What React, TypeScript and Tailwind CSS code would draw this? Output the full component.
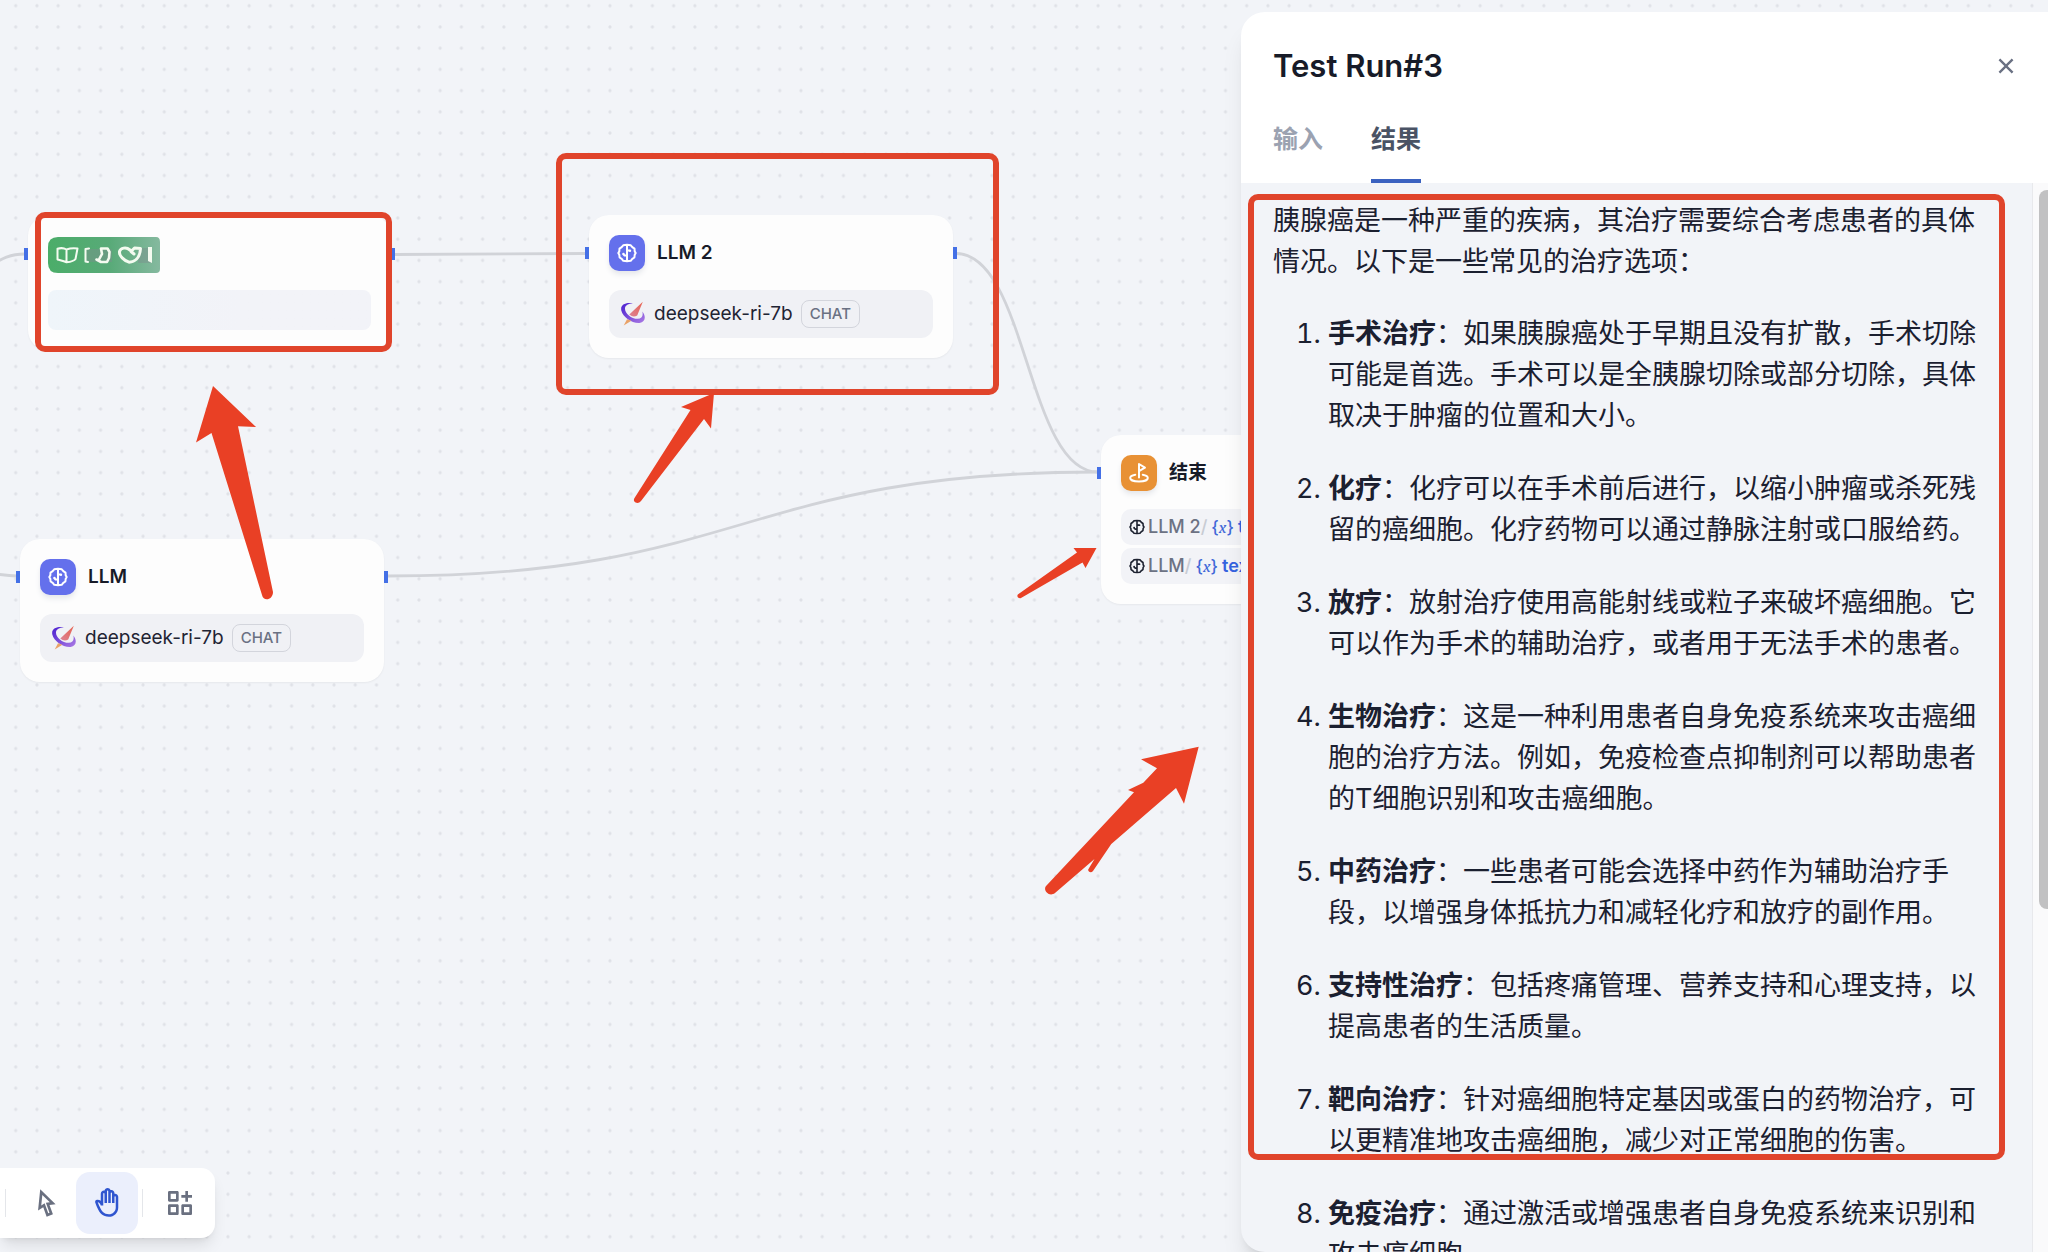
import type { ReactNode } from "react";
import { RiCloseLine, RiCursorLine, RiFunctionAddLine, RiHand } from "react-icons/ri";

const TREATMENTS = [
    { name: "手术治疗", text: "如果胰腺癌处于早期且没有扩散，手术切除可能是首选。手术可以是全胰腺切除或部分切除，具体取决于肿瘤的位置和大小。" },
    { name: "化疗", text: "化疗可以在手术前后进行，以缩小肿瘤或杀死残留的癌细胞。化疗药物可以通过静脉注射或口服给药。" },
    { name: "放疗", text: "放射治疗使用高能射线或粒子来破坏癌细胞。它可以作为手术的辅助治疗，或者用于无法手术的患者。" },
    { name: "生物治疗", text: "这是一种利用患者自身免疫系统来攻击癌细胞的治疗方法。例如，免疫检查点抑制剂可以帮助患者的T细胞识别和攻击癌细胞。" },
    { name: "中药治疗", text: "一些患者可能会选择中药作为辅助治疗手段，以增强身体抵抗力和减轻化疗和放疗的副作用。" },
    { name: "支持性治疗", text: "包括疼痛管理、营养支持和心理支持，以提高患者的生活质量。" },
    { name: "靶向治疗", text: "针对癌细胞特定基因或蛋白的药物治疗，可以更精准地攻击癌细胞，减少对正常细胞的伤害。" },
    { name: "免疫治疗", text: "通过激活或增强患者自身免疫系统来识别和攻击癌细胞。" },
];

const BrainIcon = ({ className }: { className: string }) => (
    <svg viewBox="0 0 20 20" fill="none" stroke="currentColor" strokeWidth="2" strokeLinejoin="round" className={className} aria-hidden>
        <path d="M10 1.8v16.4M10 1.8 6.2 2.3 4.7 4.1 2.5 5.6 2.3 8.4 1.3 10 2.3 11.8 2.6 14.5 4.7 15.9 6.3 17.8 10 18.2 13.7 17.8 15.3 15.9 17.4 14.5 17.7 11.8 18.7 10 17.7 8.4 17.5 5.6 15.3 4.1 13.8 2.3Z" />
        <path d="M10 7.6h2.6M10 12.6H7.6L6.4 11.2" />
        <circle cx="13" cy="7.7" r="1.2" fill="currentColor" stroke="none" />
        <circle cx="6.4" cy="11" r="1.2" fill="currentColor" stroke="none" />
    </svg>
);

const FlagIcon = () => (
    <svg viewBox="0 0 20 20" fill="none" stroke="currentColor" strokeWidth="1.8" strokeLinejoin="round" strokeLinecap="round" className="size-[22px]" aria-hidden>
        <path d="M10 14V1.8l5.4 3.3L10 8.2" />
        <path d="M6.6 11.6c-2.7.5-4.6 1.5-4.6 2.9 0 1.9 3.5 3.2 8 3.2s8-1.3 8-3.2c0-1.400-1.900-2.400-4.600-2.900" />
    </svg>
);

const ModelLogo = () => (
    <svg viewBox="0 0 26 26" className="size-[26px] shrink-0" aria-hidden>
        <defs>
            <linearGradient id="ring" x1="0" y1="0" x2="1" y2="1">
                <stop offset="0" stopColor="#4a1fd0" />
                <stop offset="1" stopColor="#ab7be4" />
            </linearGradient>
            <linearGradient id="needle" x1="1" y1="0" x2="0" y2="1">
                <stop offset="0" stopColor="#e8604c" />
                <stop offset="1" stopColor="#dc8496" />
            </linearGradient>
        </defs>
        <path d="M13 2.300C5 1 .2 4 1.300 9.400 3 16.200 12 22.600 19.600 22 25.600 21.200 26.200 15.200 22.300 10.600 23.600 14.800 21.600 17.800 17.800 17.800 11 17.800 4.600 12 5 7.200 5.300 4.200 8.300 2.700 13 2.300Z" fill="url(#ring)" />
        <path d="M22.800.7 9.300 13.600Q13 16.700 17.200 14.600Z" fill="url(#needle)" />
        <path d="M7 18.300 11.400 19.800 3.700 24.600Z" fill="#e9a268" />
    </svg>
);

const Handle = ({ side }: { side: "left" | "right" }) => (
    <span className={side === "left" ? "absolute top-8 -left-1 h-3 w-1 bg-[#4470e6]" : "absolute top-8 -right-1 h-3 w-1 bg-[#4470e6]"} />
);

const LlmNode = ({ title, position }: { title: string; position: string }) => (
    <article className={`absolute w-[364px] rounded-[20px] bg-[#fdfdfd] p-5 shadow-xs ${position}`}>
        <Handle side="left" />
        <Handle side="right" />
        <div className="flex items-center gap-3">
            <span className="flex size-9 items-center justify-center rounded-[10px] bg-[#6470ec] text-white shadow-md shadow-gray-200">
                <BrainIcon className="size-5" />
            </span>
            <h3 className="text-[19px] leading-6 font-semibold text-[#171b28]">{title}</h3>
        </div>
        <div className="mt-[19px] flex h-12 items-center rounded-xl bg-[#f0f1f5] pl-[11px]">
            <ModelLogo />
            <span className="ml-2 text-[19px] leading-6 text-[#1f2433]">deepseek-ri-7b</span>
            <span className="ml-2 flex h-7 items-center rounded-lg border border-[#d3d5dc] px-2 text-[15px] leading-5 font-medium text-[#6a7183]">CHAT</span>
        </div>
    </article>
);

const OutputRow = ({ source }: { source: string }) => (
    <div className="flex h-9 items-center overflow-hidden rounded-[10px] bg-[#f2f3f7] pl-2 text-[18px] leading-6 font-medium whitespace-nowrap text-[#6c7283]">
        <BrainIcon className="mr-[3px] size-4 shrink-0 text-[#1d2230]" />
        {source}
        <span className="text-[#c8ccd4]">/</span>
        <span className="ml-1 text-[17px] text-[#4168d8]">
            {"{"}
            <i className="font-serif">x</i>
            {"}"}
        </span>
        <span className="ml-1 font-semibold text-[#3563e0]">text</span>
    </div>
);

const Edges = () => (
    <svg className="absolute inset-0 h-full w-full" aria-hidden>
        <defs>
            <pattern id="dots" x="5.100" y="-4.900" width="21.224" height="21.224" patternUnits="userSpaceOnUse">
                <circle cx="10.600" cy="10.600" r="1.600" fill="#dfe1e7" />
            </pattern>
        </defs>
        <rect width="100%" height="100%" fill="url(#dots)" />
        <g fill="none" stroke="#d1d3d8" strokeWidth="2.800">
            <path d="M-14 268C0 260 8 254 25 254" />
            <path d="M-20 573C-8 573 0 575 17 576" />
            <path d="M395 254.500 586 253.500" />
            <path d="M956 253.500C1027 253.500 1027 472 1098 472" />
            <path d="M388 576C743 576 743 472 1098 472" />
        </g>
    </svg>
);

const Arrows = () => (
    <svg className="pointer-events-none absolute inset-0 h-full w-full" fill="#e94025" aria-hidden>
        <path d="M213 386 256 427 238 426.300 273 592C273 600 263.500 602 262 595L211.500 433 196 442.500Z" />
        <path d="M714 393 711 428.500 704 419 641 501C638 505 632 502 634.500 498L690.500 410 681 407Z" />
        <path d="M1096.500 548 1085.500 568 1082.500 562.500 1021 598C1018 599 1016 595.500 1018.500 594L1077 552.500 1073.500 548Z" />
        <path d="M1198.700 746.700 1184 803.700 1176 788 1111.300 844 1093 871C1091 873.500 1087 871.500 1088.500 869L1094.500 859 1055 893C1049 897.500 1042 890 1046.500 885.500L1134 792.300 1128 790 1143.300 782.700 1157 768.300 1141 759.300Z" />
    </svg>
);

const Frame = ({ position }: { position: string }) => (
    <div className={`pointer-events-none absolute rounded-[10px] border-6 border-[#e0442b] ${position}`} />
);

const ToolButton = ({ label, active, children }: { label: string; active?: boolean; children: ReactNode }) => (
    <button
        type="button"
        aria-label={label}
        className={active
            ? "flex size-[62px] items-center justify-center rounded-[14px] bg-[#ebeffc] text-[#2f55cf]"
            : "flex size-[62px] items-center justify-center rounded-[14px] text-[#6a7080]"}
    >
        {children}
    </button>
);

const Canvas = () => (
    <main className="absolute inset-0 overflow-hidden">
        <Edges />

        <article className="absolute top-[216px] left-[28px] w-[363px] rounded-[20px] bg-[#fdfdfd] p-5 shadow-xs">
            <Handle side="left" />
            <Handle side="right" />
            <svg viewBox="0 0 112 36" className="mt-px h-9 w-28" fill="none" aria-hidden>
                <defs>
                    <linearGradient id="badge">
                        <stop offset="0" stopColor="#4bad69" />
                        <stop offset=".55" stopColor="#58aa78" />
                        <stop offset="1" stopColor="#85b99f" />
                    </linearGradient>
                </defs>
                <path d="M10 0H108Q112 0 112 5V32Q112 36 108 36H10Q0 36 0 26V10Q0 0 10 0Z" fill="url(#badge)" />
                <path d="M37 12H64V25H37ZM90 11H104V26H90Z" fill="#7d8f8d" opacity=".45" />
                <g stroke="#f4fbf0" strokeWidth="2" strokeLinejoin="round" strokeLinecap="round">
                    <path d="M18.500 12.500C16 11 12 11 9.500 11.800V22.500C12 23.300 15 24 18.500 25.300 23 24.800 26.500 23.500 27.500 22L29.500 11.500C26 11 22 11.200 18.500 12.500ZM18.500 12.500V25" />
                    <path d="M41 11.500 37.500 12V24.500L40 25" />
                    <path d="M53 11.500H59.500L61.500 15 61 21 59 25H53L48.500 22.500M53 11.500 54 17 51 22.500" strokeWidth="2.600" />
                    <path d="M82 13C78 9.500 72.500 11 71.500 14.500 71 19 76 23.500 81 25.200 87 25 92 21 92.500 11.500L86.500 11 83 14.500 86 17" strokeWidth="3" />
                </g>
                <path d="M100 10H104V26L100 24Z" fill="#f4fbf0" />
            </svg>
            <div className="mt-[17px] h-10 rounded-lg bg-linear-to-r from-[#eff5fa] to-[#f2f3f8] to-60%" />
        </article>

        <LlmNode title="LLM 2" position="top-[215px] left-[589px]" />
        <LlmNode title="LLM" position="top-[539px] left-[20px]" />

        <article className="absolute top-[435px] left-[1101px] w-[364px] rounded-[20px] bg-[#fdfdfd] p-5 shadow-xs">
            <Handle side="left" />
            <div className="flex items-center gap-3">
                <span className="flex size-9 items-center justify-center rounded-[10px] bg-[#e89135] text-white shadow-md shadow-gray-200">
                    <FlagIcon />
                </span>
                <h3 className="text-[19px] leading-6 font-semibold text-[#171b28]">结束</h3>
            </div>
            <div className="mt-[18px] space-y-[3px]">
                <OutputRow source="LLM 2" />
                <OutputRow source="LLM" />
            </div>
        </article>

        <Frame position="top-[212px] left-[35px] h-[140px] w-[357px]" />
        <Frame position="top-[153px] left-[556px] h-[242px] w-[443px]" />
        <Arrows />

        <nav className="absolute bottom-[14px] left-0 flex items-center rounded-r-[14px] bg-white p-1 shadow-lg" aria-label="Canvas tools">
            <span className="mr-2 ml-px h-7 w-px bg-[#e4e6ea]" />
            <ToolButton label="Pointer">
                <RiCursorLine className="size-8" />
            </ToolButton>
            <ToolButton label="Hand" active>
                <RiHand className="size-[30px]" />
            </ToolButton>
            <span className="mr-1.5 ml-1 h-7 w-px bg-[#e4e6ea]" />
            <ToolButton label="Organize">
                <RiFunctionAddLine className="size-8" />
            </ToolButton>
        </nav>
    </main>
);

const ResultPanel = () => (
    <aside className="relative mt-3 flex w-[807px] flex-col overflow-hidden rounded-l-[24px] bg-[#f2f4f8] shadow-xl">
        <header className="h-[171px] shrink-0 bg-white pr-7 pl-8">
            <div className="flex items-center justify-between pt-8">
                <h2 className="text-[31px] leading-11 font-semibold text-[#171b28]">Test Run#3</h2>
                <button type="button" aria-label="Close" className="text-[#6a7183]">
                    <RiCloseLine className="size-7" />
                </button>
            </div>
            <div className="mt-[30px] flex gap-12 text-[25px] font-semibold" role="tablist">
                <button type="button" role="tab" aria-selected={false} className="h-[65px] border-b-4 border-transparent pb-5 leading-10 text-[#9ba2b1]">输入</button>
                <button type="button" role="tab" aria-selected className="h-[65px] border-b-4 border-[#3b62c0] pb-5 leading-10 text-[#4a5365]">结果</button>
            </div>
        </header>
        <div className="flex min-h-0 flex-1">
            <div className="flex-1 overflow-hidden pt-[17px] pr-12 pl-8 text-[27px] leading-[41px] text-[#1b2030]">
                <p>胰腺癌是一种严重的疾病，其治疗需要综合考虑患者的具体情况。以下是一些常见的治疗选项：</p>
                <ol className="mt-[31px] list-decimal space-y-8 pl-[55px]">
                    {TREATMENTS.map((item) => (
                        <li key={item.name}>
                            <strong className="font-bold">{item.name}</strong>：{item.text}
                        </li>
                    ))}
                </ol>
            </div>
            <div className="w-4 shrink-0 overflow-hidden border-l border-[#e8e9ec] bg-[#fafafb] pt-[7px] pl-[6px]">
                <div className="h-[719px] w-4 rounded-lg bg-[#c1c1c2]" />
            </div>
        </div>
        <Frame position="top-[182px] right-[43px] left-[7px] h-[966px]" />
    </aside>
);

export default function App() {
    return (
        <div className="relative flex h-screen justify-end overflow-hidden bg-[#f2f4f8] font-['Inter','Noto_Sans_CJK_SC',sans-serif]" lang="zh-CN">
            <Canvas />
            <ResultPanel />
        </div>
    );
}
